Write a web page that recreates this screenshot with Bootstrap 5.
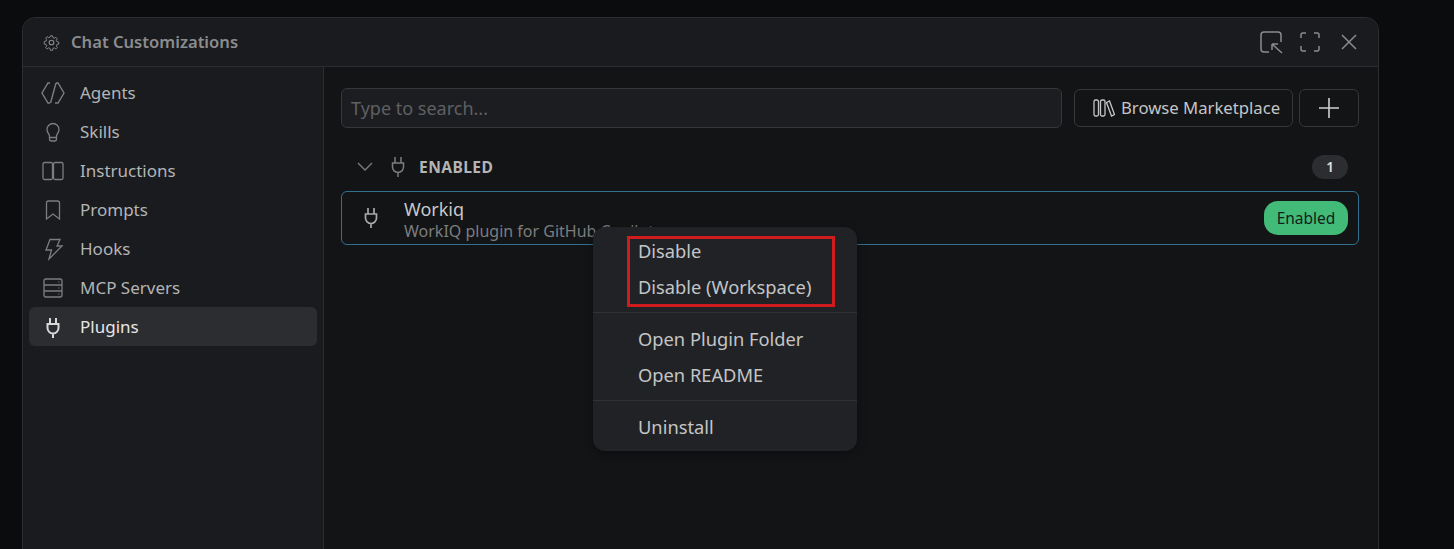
<!DOCTYPE html>
<html lang="en">
<head>
    <meta charset="UTF-8">
    <title>Chat Customizations</title>
    <link href="https://cdn.jsdelivr.net/npm/bootstrap@5.3.0/dist/css/bootstrap.min.css" rel="stylesheet">
    <style>
        html, body { height: 549px; overflow: hidden; }
        body {
            background: #0b0c0d;
            color: #c4c5c6;
            font-family: "Noto Sans", "Open Sans", sans-serif;
            font-size: 17px;
            padding: 17px 0 0 22px;
        }
        .win {
            width: 1357px;
            height: 532px;
            background: #131416;
            border: 1px solid #2c2d30;
            border-bottom: 0;
            border-radius: 14px 14px 0 0;
            overflow: hidden;
        }
        .win-head {
            height: 49px;
            flex: none;
            background: #1a1b1e;
            border-bottom: 1px solid #2c2d30;
            padding: 0 17px 0 20px;
            color: #8b8c8e;
            font-size: 16.6px;
            font-weight: 600;
        }
        .gear { margin-right: 11px; }
        .head-icons { gap: 15px; }
        .side {
            width: 301px;
            flex: none;
            background: #1a1b1e;
            border-right: 1px solid #2c2d30;
            padding: 6px;
        }
        .side-item {
            height: 39px;
            padding-left: 12px;
            border-radius: 6px;
            gap: 15px;
            color: #b3b4b5;
        }
        .side-item svg { flex: none; width: 24px; height: 24px; }
        .side-item.on { background: #2c2d30; color: #e6e6e6; }
        .main-pane { padding: 21px 19px 0 17px; position: relative; }
        .search-box {
            flex: 1;
            height: 40px;
            background: #1c1d20;
            border: 1px solid #36373a;
            border-radius: 6px;
            padding: 0 9px;
            color: #5e6062;
            font-size: 18px;
        }
        .ghost-btn {
            height: 38px;
            border: 1px solid #36373a;
            border-radius: 6px;
            color: #c4c5c6;
            background: transparent;
        }
        .market { width: 219px; margin-left: 12px; padding-left: 18px; gap: 6px; font-size: 16.7px; }
        .plus { width: 60px; margin-left: 6px; }
        .group-head { height: 44px; margin-top: 17px; padding: 0 11px 0 15px; }
        .group-plug { margin-left: 15px; }
        .group-label { font-size: 15.6px; font-weight: 700; color: #b3b4b5; letter-spacing: .4px; margin-left: 12px; padding-top: 2px; }
        .count {
            width: 36px; height: 24px; border-radius: 12px;
            background: #2c2d30; color: #e0e0e0;
            font-size: 13.5px; font-weight: 600;
        }
        .plugin-row {
            height: 54px;
            margin-top: 2px;
            border: 1px solid #33708f;
            border-radius: 6px;
            padding: 0 10px 0 19px;
        }
        .plugin-text { margin-left: 23px; padding-top: 1px; }
        .plugin-name { font-size: 18px; line-height: 24px; color: #c8c9ca; }
        .plugin-desc { font-size: 16px; line-height: 20px; color: #7c7d7f; white-space: nowrap; }
        .on-pill {
            width: 84px; height: 34px; border-radius: 14px;
            background: #42bb78; color: #11201a; font-size: 15.5px;
            padding-top: 1px;
        }
        .ctx-menu {
            position: absolute;
            left: 269px; top: 160px;
            width: 264px; height: 224px;
            background: #212225;
            border-radius: 12px;
            padding: 6px 0;
            box-shadow: 0 2px 8px rgba(0,0,0,.4);
            font-size: 18.3px;
            color: #c4c5c6;
        }
        .ctx-item { height: 36px; padding-left: 45px; display: flex; align-items: center; }
        .ctx-sep { border-top: 1px solid #303134; margin: 7px 0 8px; }
        .ctx-mark {
            position: absolute;
            left: 34px; top: 9px;
            width: 208px; height: 71px;
            border: 3px solid #d01c1c;
        }
    </style>
</head>
<body>
    <div class="win d-flex flex-column">
        <div class="win-head d-flex align-items-center">
            <svg class="gear" width="17" height="17" viewBox="0 0 16 16" fill="none" stroke="#8b8c8e" stroke-width="1"><circle cx="8" cy="8" r="2.2"/><path d="M6.9 1h2.2l.4 2 1.4.6 1.7-1.1 1.5 1.5-1.100 1.700.6 1.400 2 .4v2.200l-2 .4-.6 1.400 1.100 1.700-1.500 1.500-1.700-1.100-1.400.6-.4 2H6.900l-.4-2-1.400-.6-1.700 1.100-1.500-1.500 1.100-1.700-.6-1.400-2-.4V6.900l2-.4.6-1.400-1.100-1.700L3.400 1.900l1.700 1.100 1.400-.6z" transform="translate(.8 .8) scale(.9)"/></svg>
            <span>Chat Customizations</span>
            <div class="head-icons d-flex align-items-center ms-auto">
                <svg width="24" height="24" viewBox="0 0 24 24" fill="none" stroke="#8b8c8e" stroke-width="1.500"><path d="M10 22H5a3 3 0 0 1-3-3V5a3 3 0 0 1 3-3h14a3 3 0 0 1 3 3v7"/><path d="M13 14h6M13 14v6M13 14l10 9"/></svg>
                <svg width="24" height="24" viewBox="0 0 24 24" fill="none" stroke="#8b8c8e" stroke-width="1.500"><path d="M3 8V5a2 2 0 0 1 2-2h3M16 3h3a2 2 0 0 1 2 2v3M21 16v3a2 2 0 0 1-2 2h-3M8 21H5a2 2 0 0 1-2-2v-3"/></svg>
                <svg width="24" height="24" viewBox="0 0 24 24" fill="none" stroke="#8b8c8e" stroke-width="1.500"><path d="M5 5l14 14M19 5L5 19"/></svg>
            </div>
        </div>
        <div class="d-flex flex-grow-1">
            <div class="side">
                <div class="side-item d-flex align-items-center">
                    <svg viewBox="0 0 24 24" fill="none" stroke="#7c7d7f" stroke-width="1.400"><path d="M9 2H7L1 12l6 10h2M15 2h2l6 10-6 10h-3M15 2L9.500 22"/></svg>
                    <span>Agents</span>
                </div>
                <div class="side-item d-flex align-items-center">
                    <svg viewBox="0 0 24 24" fill="none" stroke="#7c7d7f" stroke-width="1.300"><path d="M8.500 16c0-2-2.500-3.300-2.500-6.500a6 6 0 0 1 12 0c0 3.200-2.500 4.500-2.500 6.500v3a2 2 0 0 1-2 2h-3a2 2 0 0 1-2-2zM8.500 17.500h7"/></svg>
                    <span>Skills</span>
                </div>
                <div class="side-item d-flex align-items-center">
                    <svg viewBox="0 0 24 24" fill="none" stroke="#7c7d7f" stroke-width="1.300"><rect x="2" y="3.500" width="9.500" height="17" rx="1.500"/><rect x="12.500" y="3.500" width="9.500" height="17" rx="1.500"/></svg>
                    <span>Instructions</span>
                </div>
                <div class="side-item d-flex align-items-center">
                    <svg viewBox="0 0 24 24" fill="none" stroke="#7c7d7f" stroke-width="1.300"><path d="M5.500 21V5a2 2 0 0 1 2-2h9a2 2 0 0 1 2 2v16L12 16z"/></svg>
                    <span>Prompts</span>
                </div>
                <div class="side-item d-flex align-items-center">
                    <svg viewBox="0 0 24 24" fill="none" stroke="#7c7d7f" stroke-width="1.300"><path d="M9 2.500h10l-3 6.500h5L8 22l2.500-9H5z"/></svg>
                    <span>Hooks</span>
                </div>
                <div class="side-item d-flex align-items-center">
                    <svg viewBox="0 0 24 24" fill="none" stroke="#7c7d7f" stroke-width="1.300"><rect x="3" y="3" width="18" height="18" rx="2"/><path d="M3 9h18M3 15h18"/><path d="M17.500 6h.8M17.500 12h.8M17.500 18h.8"/></svg>
                    <span>MCP Servers</span>
                </div>
                <div class="side-item on d-flex align-items-center">
                    <svg viewBox="0 0 24 24" fill="none" stroke="#d8d8d8" stroke-width="2"><path d="M9 3v6M15 3v6M6.500 9h11v4a5.500 5.500 0 0 1-11 0zM12 18.500V23"/></svg>
                    <span>Plugins</span>
                </div>
            </div>
            <div class="main-pane flex-grow-1">
                <div class="d-flex align-items-center">
                    <div class="search-box d-flex align-items-center">Type to search...</div>
                    <div class="ghost-btn market d-flex align-items-center">
                        <svg width="22" height="20" viewBox="0 0 22 20" fill="none" stroke="#c4c5c6" stroke-width="1.300"><rect x="1" y="2" width="4.500" height="16" rx="1.500"/><rect x="7.500" y="2" width="4.500" height="16" rx="1.500"/><path d="M13.500 4.500l3-1.500 5 13.500-3 1.500z"/></svg>
                        <span>Browse Marketplace</span>
                    </div>
                    <div class="ghost-btn plus d-flex align-items-center justify-content-center">
                        <svg width="22" height="22" viewBox="0 0 22 22" stroke="#d0d0d0" stroke-width="1.600"><path d="M11 1v20M1 11h20"/></svg>
                    </div>
                </div>
                <div class="group-head d-flex align-items-center">
                    <svg width="18" height="12" viewBox="0 0 18 12" fill="none" stroke="#7c7d7f" stroke-width="1.300"><path d="M2 2l7 7 7-7"/></svg>
                    <svg class="group-plug" width="18" height="24" viewBox="0 0 18 24" fill="none" stroke="#7c7d7f" stroke-width="1.500"><path d="M6 2v6M12 2v6M3.500 8h11v4a5.500 5.500 0 0 1-11 0zM9 17.500V22"/></svg>
                    <span class="group-label">ENABLED</span>
                    <span class="count d-flex align-items-center justify-content-center ms-auto">1</span>
                </div>
                <div class="plugin-row d-flex align-items-center">
                    <svg width="20" height="24" viewBox="0 0 20 24" fill="none" stroke="#a8a9aa" stroke-width="1.700"><path d="M7 2v6M13 2v6M4.500 8h11v4a5.500 5.500 0 0 1-11 0zM10 17.500V22"/></svg>
                    <div class="plugin-text">
                        <div class="plugin-name">Workiq</div>
                        <div class="plugin-desc">WorkIQ plugin for GitHub Copilot</div>
                    </div>
                    <span class="on-pill d-flex align-items-center justify-content-center ms-auto">Enabled</span>
                </div>
                <div class="ctx-menu">
                    <div class="ctx-item">Disable</div>
                    <div class="ctx-item">Disable (Workspace)</div>
                    <div class="ctx-sep"></div>
                    <div class="ctx-item">Open Plugin Folder</div>
                    <div class="ctx-item">Open README</div>
                    <div class="ctx-sep"></div>
                    <div class="ctx-item">Uninstall</div>
                    <div class="ctx-mark"></div>
                </div>
            </div>
        </div>
    </div>
    <script src="https://cdn.jsdelivr.net/npm/bootstrap@5.3.0/dist/js/bootstrap.bundle.min.js"></script>
</body>
</html>
